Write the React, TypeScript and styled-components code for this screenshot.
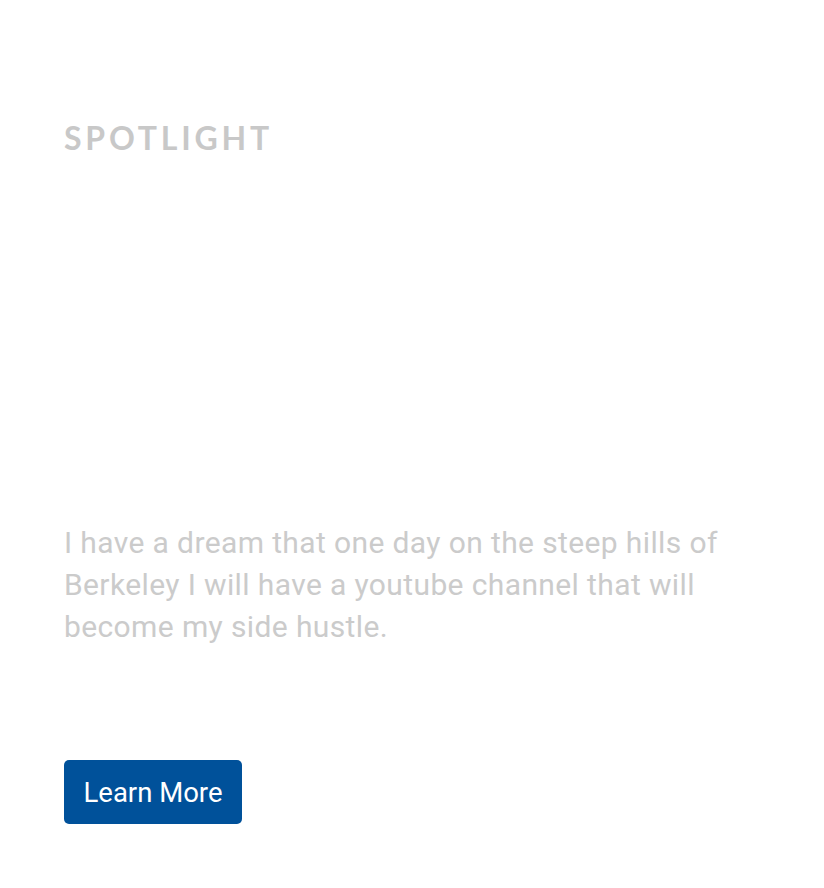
import React from "react";
import styled, { createGlobalStyle } from "styled-components";

const Global = createGlobalStyle`
  html, body { margin: 0; padding: 0; background: #ffffff; }
  * { box-sizing: border-box; }
`;

const Section = styled.section`
  width: 824px;
  height: 888px;
  padding: 122px 64px 0 64px;
  display: flex;
  flex-direction: column;
  align-items: flex-start;
  background: #ffffff;
`;

const Eyebrow = styled.h2`
  margin: 0;
  font-family: Lato, "Open Sans", sans-serif;
  font-weight: 700;
  font-size: 32px;
  line-height: 32px;
  letter-spacing: 3.8px;
  color: #c8c8c8;
  text-transform: uppercase;
`;

const Body = styled.p`
  margin: 368px 0 0 0;
  max-width: 680px;
  font-family: Roboto, "Liberation Sans", sans-serif;
  font-weight: 400;
  font-size: 30px;
  line-height: 42px;
  letter-spacing: 0.38px;
  color: #cbcbcb;
`;

const Button = styled.a`
  margin-top: 112px;
  display: inline-flex;
  align-items: center;
  justify-content: center;
  height: 64px;
  width: 178px;
  border-radius: 5px;
  background: #00519a;
  color: #ffffff;
  font-family: Roboto, "Liberation Sans", sans-serif;
  font-size: 27.5px;
  font-weight: 400;
  text-decoration: none;
`;

export default function App() {
  return (
    <>
      <Global />
      <Section>
        <Eyebrow>Spotlight</Eyebrow>
        <Body>
          I have a dream that one day on the steep hills of Berkeley I will have a youtube channel that will become my side hustle.
        </Body>
        <Button href="#">Learn More</Button>
      </Section>
    </>
  );
}
